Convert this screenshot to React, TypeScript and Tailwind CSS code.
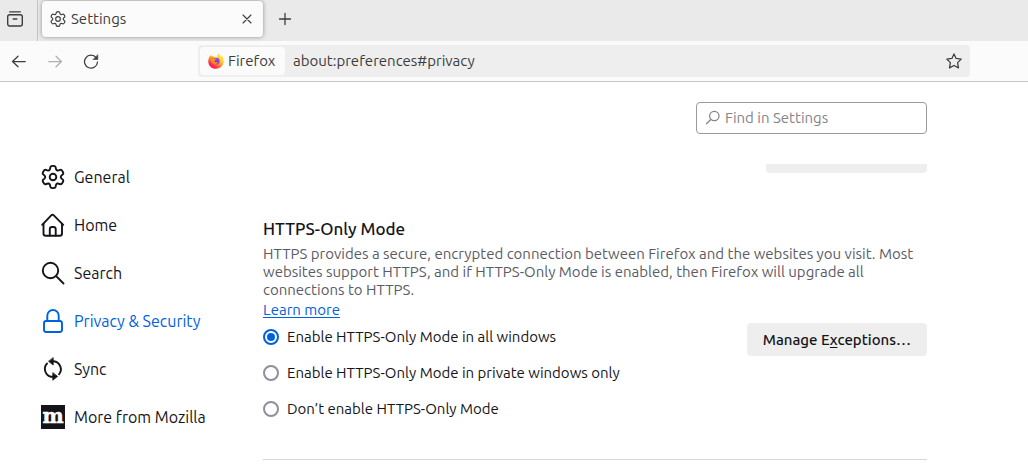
import { useState } from "react";
import type { ReactNode } from "react";

function gearPath(): string {
  const lobe: [number, number][] = [
    [-30, 7.6],
    [-19, 8.6],
    [-13, 11.4],
    [13, 11.4],
    [19, 8.6],
  ];
  const pts: [number, number][] = [];
  for (let i = 0; i < 6; i++) {
    for (const [angle, radius] of lobe) {
      const a = ((i * 60 + angle - 90) * Math.PI) / 180;
      pts.push([12 + radius * Math.cos(a), 12 + radius * Math.sin(a)]);
    }
  }
  const mid = (i: number) => {
    const p = pts[i % pts.length];
    const q = pts[(i + 1) % pts.length];
    return `${((p[0] + q[0]) / 2).toFixed(2)} ${((p[1] + q[1]) / 2).toFixed(2)}`;
  };
  let d = `M${mid(0)}`;
  for (let i = 1; i <= pts.length; i++) {
    const p = pts[i % pts.length];
    d += `Q${p[0].toFixed(2)} ${p[1].toFixed(2)} ${mid(i)}`;
  }
  return d + "Z";
}

const GEAR = gearPath();

function Icon({ className, stroke = 1.9, children }: { className: string; stroke?: number; children: ReactNode }) {
  return (
    <svg
      viewBox="0 0 24 24"
      className={className}
      fill="none"
      stroke="currentColor"
      strokeWidth={stroke}
      strokeLinecap="round"
      strokeLinejoin="round"
      aria-hidden="true"
    >
      {children}
    </svg>
  );
}

function SmallIcon({ className = "size-4", children }: { className?: string; children: ReactNode }) {
  return (
    <svg
      viewBox="0 0 16 16"
      className={className}
      fill="none"
      stroke="currentColor"
      strokeWidth="1.25"
      strokeLinecap="round"
      strokeLinejoin="round"
      aria-hidden="true"
    >
      {children}
    </svg>
  );
}

function FirefoxLogo() {
  return (
    <svg viewBox="0 0 16 16" className="size-4 shrink-0" aria-hidden="true">
      <defs>
        <linearGradient id="ff-body" x1="0.85" y1="0.1" x2="0.2" y2="0.95">
          <stop offset="0" stopColor="#fff44f" />
          <stop offset="0.35" stopColor="#ffc42e" />
          <stop offset="0.6" stopColor="#ff7a39" />
          <stop offset="0.82" stopColor="#ff2a4d" />
          <stop offset="1" stopColor="#f5156c" />
        </linearGradient>
        <linearGradient id="ff-globe" x1="0.7" y1="0" x2="0.3" y2="1">
          <stop offset="0" stopColor="#a04bdc" />
          <stop offset="1" stopColor="#5b35c4" />
        </linearGradient>
      </defs>
      <path
        d="M10.6 0.2C11.2 1.9 12.4 2.5 13.4 3.8L13.9 2.6C15.2 4.6 15.8 7 15.7 8.8C15.4 12.8 12 15.8 8 15.8C3.7 15.8 0.3 12.6 0.3 8.4C0.3 6.6 0.8 4.8 1.8 3.5L2.5 1.9L3.5 3.6C4.2 3.3 5 3.2 5.9 3.5C7 4.3 8.2 4.5 9.1 4.4C8.7 2.7 9.4 1.1 10.6 0.2Z"
        fill="url(#ff-body)"
      />
      <circle cx="8.3" cy="8" r="3.3" fill="url(#ff-globe)" />
      <path
        d="M2.2 5.2C4 4.3 5.8 4.7 6.8 5.7L8.7 6C8.5 7 7.2 7.2 6.7 7.6C6.3 8.3 6.6 9 7.6 9.2C8.5 9.5 9.3 8.7 10.2 9.1C9.6 11 7.6 11.7 6 11.2C3.8 10.2 2.5 8 2.2 5.2Z"
        fill="#ff8a1e"
      />
    </svg>
  );
}

const sections: { id: string; label: string; icon: ReactNode }[] = [
  {
    id: "general",
    label: "General",
    icon: (
      <Icon className="size-6">
        <path d={GEAR} />
        <circle cx="12" cy="12" r="3.3" />
      </Icon>
    ),
  },
  {
    id: "home",
    label: "Home",
    icon: (
      <Icon className="size-6">
        <path d="M1.2 11.8L10.2 2.3Q11.5 1 12.8 2.3L22.2 11.8" />
        <path d="M2.5 10.8V20.5Q2.5 22.8 4.8 22.8H18.8Q21 22.8 21 20.5V10.8" />
        <path d="M8.8 22.5V16.2Q8.8 14 11 14H12.5Q14.7 14 14.7 16.2V22.5" />
      </Icon>
    ),
  },
  {
    id: "search",
    label: "Search",
    icon: (
      <Icon className="size-6">
        <circle cx="9.5" cy="9.5" r="7.7" />
        <path d="M15.2 15.2L22.5 22.5" />
      </Icon>
    ),
  },
  {
    id: "privacy",
    label: "Privacy & Security",
    icon: (
      <Icon className="size-6">
        <rect x="3" y="12" width="18" height="11" rx="2.2" />
        <path d="M6.3 12V6.7a5.7 5.7 0 0 1 11.4 0V12" />
      </Icon>
    ),
  },
  {
    id: "sync",
    label: "Sync",
    icon: (
      <Icon className="size-6">
        <g strokeLinecap="butt">
          <path d="M8.6 19.3A8 8 0 0 1 6.6 6" />
          <path d="M11 4.3H12.5A8 8 0 0 1 17.6 17.8" />
          <path d="M8 19L9.5 19.7H13" />
        </g>
        <path d="M12.2 1V8L7.8 4.5Z" fill="currentColor" strokeWidth="0.8" />
        <path d="M11.8 16V23.2L16.4 19.6Z" fill="currentColor" strokeWidth="0.8" />
      </Icon>
    ),
  },
  {
    id: "mozilla",
    label: "More from Mozilla",
    icon: (
      <svg viewBox="0 0 24 24" className="size-6" aria-hidden="true">
        <rect width="24" height="24" fill="#15141a" />
        <text
          x="12"
          y="18"
          textAnchor="middle"
          fontSize="20"
          className="font-['DejaVu_Serif',serif] font-bold"
          fill="#ffffff"
          stroke="#ffffff"
          strokeWidth="0.5"
        >
          m
        </text>
      </svg>
    ),
  },
];

const modes = [
  { id: "all", label: "Enable HTTPS-Only Mode in all windows" },
  { id: "private", label: "Enable HTTPS-Only Mode in private windows only" },
  { id: "off", label: "Don’t enable HTTPS-Only Mode" },
];

function TabStrip() {
  return (
    <header className="flex h-[41px] bg-[#eaeaea] text-[#3d3d3d]">
      <div className="flex w-[38px] items-center border-r border-[#c4c4c4] pl-[7px]">
        <button type="button" aria-label="Recent browsing" className="mb-1">
          <SmallIcon>
            <path d="M2.7 0.9H13.3" />
            <rect x="0.7" y="3.7" width="14.6" height="11.3" rx="2" strokeWidth="1.4" />
            <path d="M6.2 8H9.8" strokeWidth="1.4" />
          </SmallIcon>
        </button>
      </div>
      <div className="mt-px ml-1 flex h-9 w-[221px] items-center rounded bg-[#fbfbfb] px-2 shadow-[0_0_4px_rgba(0,0,0,0.4)]">
        <Icon className="size-4 shrink-0" stroke={1.7}>
          <path d={GEAR} />
          <circle cx="12" cy="12" r="3.5" />
        </Icon>
        <span className="ml-[5px] flex-1">Settings</span>
        <button type="button" aria-label="Close tab">
          <SmallIcon>
            <path d="M4 4L12 12M12 4L4 12" strokeWidth="1.1" />
          </SmallIcon>
        </button>
      </div>
      <button type="button" aria-label="New tab" className="mb-[3px] ml-[14px]">
        <SmallIcon>
          <path d="M8 2.5V13.5M2.5 8H13.5" strokeWidth="1.3" />
        </SmallIcon>
      </button>
    </header>
  );
}

function Toolbar() {
  return (
    <nav
      aria-label="Navigation"
      className="flex h-[41px] items-center border-b border-[#c6c6c6] bg-[#fbfbfb] pr-[58px] pl-[11px] text-[#3d3d3d]"
    >
      <div className="flex w-[187px] shrink-0 items-center gap-5">
        <button type="button" aria-label="Back">
          <SmallIcon>
            <path d="M14.3 8.5H1.5M7 3.2L1.5 8.5L7 13.8" />
          </SmallIcon>
        </button>
        <button type="button" aria-label="Forward" disabled className="text-[#b0b0b0]">
          <SmallIcon>
            <path d="M1.7 8.5H14.5M9 3.2L14.5 8.5L9 13.8" />
          </SmallIcon>
        </button>
        <button type="button" aria-label="Reload">
          <SmallIcon>
            <path d="M13.2 4.7A6.5 6.5 0 1 0 14.5 9" />
            <path d="M14.8 2V6.5H10.3Z" fill="currentColor" strokeWidth="0.6" />
          </SmallIcon>
        </button>
      </div>
      <div className="flex h-8 flex-1 items-center rounded bg-[#eeeeee] p-[2px] pr-2">
        <button type="button" className="flex h-7 items-center gap-1 rounded bg-[#fbfbfb] px-2">
          <FirefoxLogo />
          <span className="w-[49px] text-left">Firefox</span>
        </button>
        <input
          aria-label="Address"
          defaultValue="about:preferences#privacy"
          className="ml-2 min-w-0 flex-1 bg-transparent outline-none"
        />
        <button type="button" aria-label="Bookmark this page">
          <SmallIcon>
            <path d="M8 0.9L10.1 5.4L15.2 6.1L11.6 9.6L12.5 14.9L8 12.5L3.5 14.9L4.4 9.6L0.8 6.1L5.9 5.4Z" />
          </SmallIcon>
        </button>
      </div>
    </nav>
  );
}

export default function App() {
  const [mode, setMode] = useState("all");

  return (
    <div className="min-h-screen bg-white font-[Ubuntu,'Noto_Sans',sans-serif] text-[15px] leading-[18px] text-[#15141a]">
      <TabStrip />
      <Toolbar />
      <div className="flex">
        <nav aria-label="Settings categories" className="w-[263px] shrink-0 pt-[71px] pl-[41px]">
          <ul>
            {sections.map((s) => (
              <li key={s.id}>
                <a
                  href={`#${s.id}`}
                  className={`flex h-12 items-center gap-[9px] text-[16px] ${s.id === "privacy" ? "text-[#0061e0]" : ""}`}
                >
                  {s.icon}
                  {s.label}
                </a>
              </li>
            ))}
          </ul>
        </nav>
        <main className="max-w-[664px] flex-1 pt-5">
          <label className="ml-auto flex h-8 w-[231px] items-center gap-1 rounded border border-[#9a9a9a] px-2 text-[#85848a]">
            <SmallIcon>
              <circle cx="9.3" cy="6" r="4.7" />
              <path d="M5.8 9.5L1.5 13.8" />
            </SmallIcon>
            <input
              type="search"
              aria-label="Find in Settings"
              placeholder="Find in Settings"
              className="min-w-0 flex-1 bg-transparent outline-none placeholder:text-[#85848a]"
            />
          </label>
          <div className="mt-[30px] ml-auto h-[9px] w-[161px] rounded-b bg-[#eeeeee]" />

          <section className="mt-[45px] border-b border-[#d8d8d8] pb-8">
            <h2 className="text-[17px] leading-[22px] font-[550]">HTTPS-Only Mode</h2>
            <p className="mt-[5px] text-[#5b5b66]">
              HTTPS provides a secure, encrypted connection between Firefox and the websites you visit. Most websites
              support HTTPS, and if HTTPS-Only Mode is enabled, then Firefox will upgrade all connections to HTTPS.
            </p>
            <a href="#learn-more" className="mt-[2px] inline-block text-[#0061e0] underline underline-offset-2">
              Learn more
            </a>
            <div className="flex items-start justify-between">
              <fieldset aria-label="HTTPS-Only Mode">
                {modes.map((m) => (
                  <label key={m.id} className="flex h-9 items-center gap-2">
                    <input
                      type="radio"
                      name="https-only"
                      checked={mode === m.id}
                      onChange={() => setMode(m.id)}
                      className="size-4 appearance-none rounded-full border-2 border-[#8f8f9d] bg-white checked:border-[#0061e0] checked:bg-[#0061e0] checked:bg-clip-content checked:p-[2px]"
                    />
                    {m.label}
                  </label>
                ))}
              </fieldset>
              <button type="button" className="mt-1 h-[33px] rounded bg-[#eeeeee] px-4 font-[550]">
                Manage E<span className="underline underline-offset-2">x</span>ceptions…
              </button>
            </div>
          </section>
        </main>
      </div>
    </div>
  );
}
